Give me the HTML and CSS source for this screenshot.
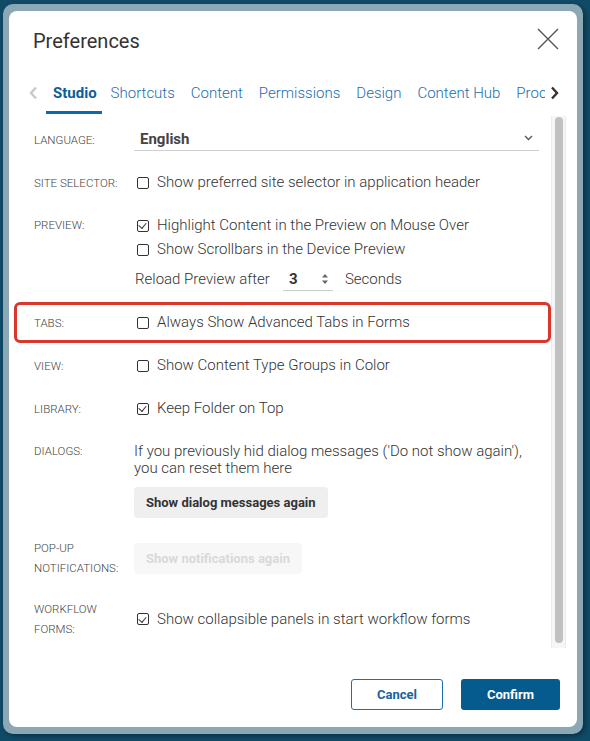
FILE: index.html
```html
<!DOCTYPE html>
<html lang="en">
<head>
<meta charset="utf-8">
<title>Preferences</title>
<link rel="stylesheet" href="styles.css">
</head>
<body>
<div class="frame">
  <div class="dialog">
    <div class="header">
      <h1 class="title">Preferences</h1>
      <svg class="close" width="22" height="22" viewBox="0 0 22 22"><path d="M1 1 L21 21 M21 1 L1 21" stroke="#555" stroke-width="1.4" fill="none"/></svg>
    </div>
    <div class="tabbar">
      <svg class="chev" width="9" height="14" viewBox="0 0 9 14"><path d="M7 1.5 L2 7 L7 12.5" stroke="#c9c9c9" stroke-width="2.4" fill="none"/></svg>
      <div class="tabs">
        <span class="tab active">Studio</span>
        <span class="tab">Shortcuts</span>
        <span class="tab">Content</span>
        <span class="tab">Permissions</span>
        <span class="tab">Design</span>
        <span class="tab">Content Hub</span>
        <span class="tab">Process</span>
      </div>
      <svg class="chev" width="9" height="14" viewBox="0 0 9 14"><path d="M2 1.5 L7 7 L2 12.5" stroke="#333" stroke-width="2.4" fill="none"/></svg>
    </div>
    <div class="body">
      <div class="content">
        <div class="row center r-lang">
          <div class="label">LANGUAGE:</div>
          <div class="select">
            <span class="sel-val">English</span>
            <svg width="9" height="6" viewBox="0 0 9 6"><path d="M1 1 L4.5 4.5 L8 1" stroke="#555" stroke-width="1.3" fill="none"/></svg>
          </div>
        </div>
        <div class="row center r-site">
          <div class="label">SITE SELECTOR:</div>
          <label class="check"><span class="box"></span>Show preferred site selector in application header</label>
        </div>
        <div class="row r-preview">
          <div class="label">PREVIEW:</div>
          <div class="stack">
            <label class="check"><span class="box checked"></span>Highlight Content in the Preview on Mouse Over</label>
            <label class="check"><span class="box"></span>Show Scrollbars in the Device Preview</label>
            <div class="reload">
              <span>Reload Preview after</span>
              <div class="num">
                <span class="num-val">3</span>
                <svg width="8" height="14" viewBox="0 0 8 14"><path d="M4 2 L7 5.5 L1 5.5 Z M4 12 L7 8.5 L1 8.5 Z" fill="#666"/></svg>
              </div>
              <span>Seconds</span>
            </div>
          </div>
        </div>
        <div class="row center r-tabs highlight">
          <div class="label">TABS:</div>
          <label class="check"><span class="box"></span>Always Show Advanced Tabs in Forms</label>
        </div>
        <div class="row center r-view">
          <div class="label">VIEW:</div>
          <label class="check"><span class="box"></span>Show Content Type Groups in Color</label>
        </div>
        <div class="row center r-lib">
          <div class="label">LIBRARY:</div>
          <label class="check"><span class="box checked"></span>Keep Folder on Top</label>
        </div>
        <div class="row r-dialogs">
          <div class="label label-dlg">DIALOGS:</div>
          <div class="stack">
            <p class="desc">If you previously hid dialog messages ('Do not show again'), you can reset them here</p>
            <button class="btn-grey">Show dialog messages again</button>
          </div>
        </div>
        <div class="row center r-popup">
          <div class="label label-2">POP-UP<br>NOTIFICATIONS:</div>
          <button class="btn-grey disabled">Show notifications again</button>
        </div>
        <div class="row center r-wf">
          <div class="label label-2">WORKFLOW<br>FORMS:</div>
          <label class="check"><span class="box checked"></span>Show collapsible panels in start workflow forms</label>
        </div>
      </div>
      <div class="track"><div class="thumb"></div></div>
    </div>
    <div class="footer">
      <button class="btn btn-cancel">Cancel</button>
      <button class="btn btn-confirm">Confirm</button>
    </div>
  </div>
</div>
</body>
</html>
```
FILE: styles.css
```css
* { box-sizing: border-box; }
html, body {
  margin: 0;
  padding: 0;
  width: 590px;
  height: 741px;
  overflow: hidden;
  background: #0f4a66;
  font-family: Roboto, "Liberation Sans", Arial, sans-serif;
}
.frame {
  margin: 4px 0 0 3px;
  width: 580px;
  height: 730px;
  padding: 7px 6px 7px 6px;
  background: #8ba8b4;
  border-radius: 10px;
  box-shadow: 2px 2px 4px rgba(0, 0, 0, 0.35);
}
.dialog {
  background: #fff;
  border-radius: 8px;
  height: 716px;
  display: flex;
  flex-direction: column;
  overflow: hidden;
}
.header {
  display: flex;
  justify-content: space-between;
  align-items: flex-start;
  padding: 18px 18px 0 24px;
}
.title {
  margin: 0;
  font-size: 20px;
  line-height: 24px;
  font-weight: 400;
  color: #333;
}
.close { margin-top: -1px; }
.tabbar {
  display: flex;
  align-items: flex-start;
  padding: 0 18px 0 20px;
  margin-top: 26px;
  margin-bottom: 2px;
}
.tabbar .chev {
  flex: none;
  margin-top: 7px;
}
.tabs {
  flex: 1;
  display: flex;
  gap: 2px;
  overflow: hidden;
  margin: 0 5px 0 8px;
  white-space: nowrap;
}
.tab {
  flex: none;
  padding: 4px 7px 8px;
  font-size: 15px;
  line-height: 20px;
  font-weight: 300;
  color: #1a6eae;
  border-bottom: 3px solid transparent;
}
.tab.active {
  font-weight: 700;
  color: #0c5e98;
  padding-right: 5px;
  border-bottom-color: #0b69ad;
}
.body {
  height: 532px;
  display: flex;
  padding: 0 11px 0 25px;
  gap: 12px;
}
.content {
  flex: 1;
  padding-top: 12px;
  color: #444;
  font-size: 15px;
  font-weight: 300;
}
.track {
  flex: none;
  width: 15px;
  background: #f6f6f6;
  border-left: 1px solid #ececec;
  border-right: 1px solid #ececec;
  padding: 1px 2px 5px 3px;
}
.thumb {
  height: 100%;
  background: #c1c1c1;
  border-radius: 4px;
}
.row {
  display: grid;
  grid-template-columns: 100px 1fr;
  align-items: start;
  position: relative;
}
.row.center { align-items: center; }
.label {
  font-size: 11.5px;
  line-height: 20px;
  font-weight: 300;
  color: #444;
}
.r-site { margin-top: 21px; }
.r-preview { margin-top: 22px; }
.r-tabs { margin-top: 21px; }
.r-view { margin-top: 22px; }
.r-lib { margin-top: 22px; }
.r-dialogs { margin-top: 24px; }
.r-popup { margin-top: 20px; }
.r-wf { margin-top: 21px; }
.r-preview .label { line-height: 21px; }
.label-dlg { line-height: 17px; }
.highlight::before {
  content: "";
  position: absolute;
  top: -10px;
  bottom: -10px;
  left: -20px;
  right: -12px;
  border: 3px solid #d9362c;
  border-radius: 6px;
}
.select {
  display: flex;
  align-items: center;
  justify-content: space-between;
  height: 23px;
  border-bottom: 1px solid #cfcfcf;
  padding: 0 6px 0 6px;
}
.sel-val {
  font-weight: 700;
  line-height: 22px;
  color: #444;
}
.select svg { margin-top: -3px; }
.check {
  display: flex;
  align-items: center;
  line-height: 21px;
  color: #333;
}
.box {
  flex: none;
  width: 12px;
  height: 12px;
  border: 1.5px solid #333;
  border-radius: 2px;
  margin: 0 8px 0 3px;
  position: relative;
}
.box.checked::after {
  content: "";
  position: absolute;
  left: 2.2px;
  top: 0.6px;
  width: 3.5px;
  height: 6px;
  border-right: 1.5px solid #333;
  border-bottom: 1.5px solid #333;
  transform: rotate(40deg);
}
.stack {
  display: flex;
  flex-direction: column;
  align-items: flex-start;
  gap: 3px;
}
.reload {
  display: flex;
  align-items: center;
  margin-top: 4px;
  color: #333;
  padding-left: 1px;
}
.num {
  display: flex;
  align-items: center;
  justify-content: space-between;
  width: 50px;
  height: 24px;
  margin: 0 12px 0 13px;
  padding: 0 4px 0 6px;
  border-bottom: 1px solid #cfcfcf;
}
.num-val {
  font-weight: 700;
  color: #333;
}
.desc {
  margin: 0;
  line-height: 17px;
  color: #333;
}
.r-dialogs .stack { gap: 10px; }
.btn-grey {
  font-family: inherit;
  font-size: 13px;
  font-weight: 700;
  color: #333;
  background: #efefef;
  border: none;
  border-radius: 4px;
  height: 31px;
  padding: 0 12px;
  justify-self: start;
}
.btn-grey.disabled {
  color: #d9d9d9;
  background: #f7f7f7;
}
.footer {
  display: flex;
  justify-content: flex-end;
  gap: 18px;
  padding: 31px 17px 17px 0;
}
.btn {
  font-family: inherit;
  font-size: 13px;
  font-weight: 700;
  height: 31px;
  border-radius: 3px;
}
.btn-cancel {
  width: 92px;
  background: #fff;
  color: #1664a0;
  border: 1px solid #1b6fae;
}
.btn-confirm {
  width: 99px;
  background: #055a8e;
  color: #fff;
  border: none;
}
```
